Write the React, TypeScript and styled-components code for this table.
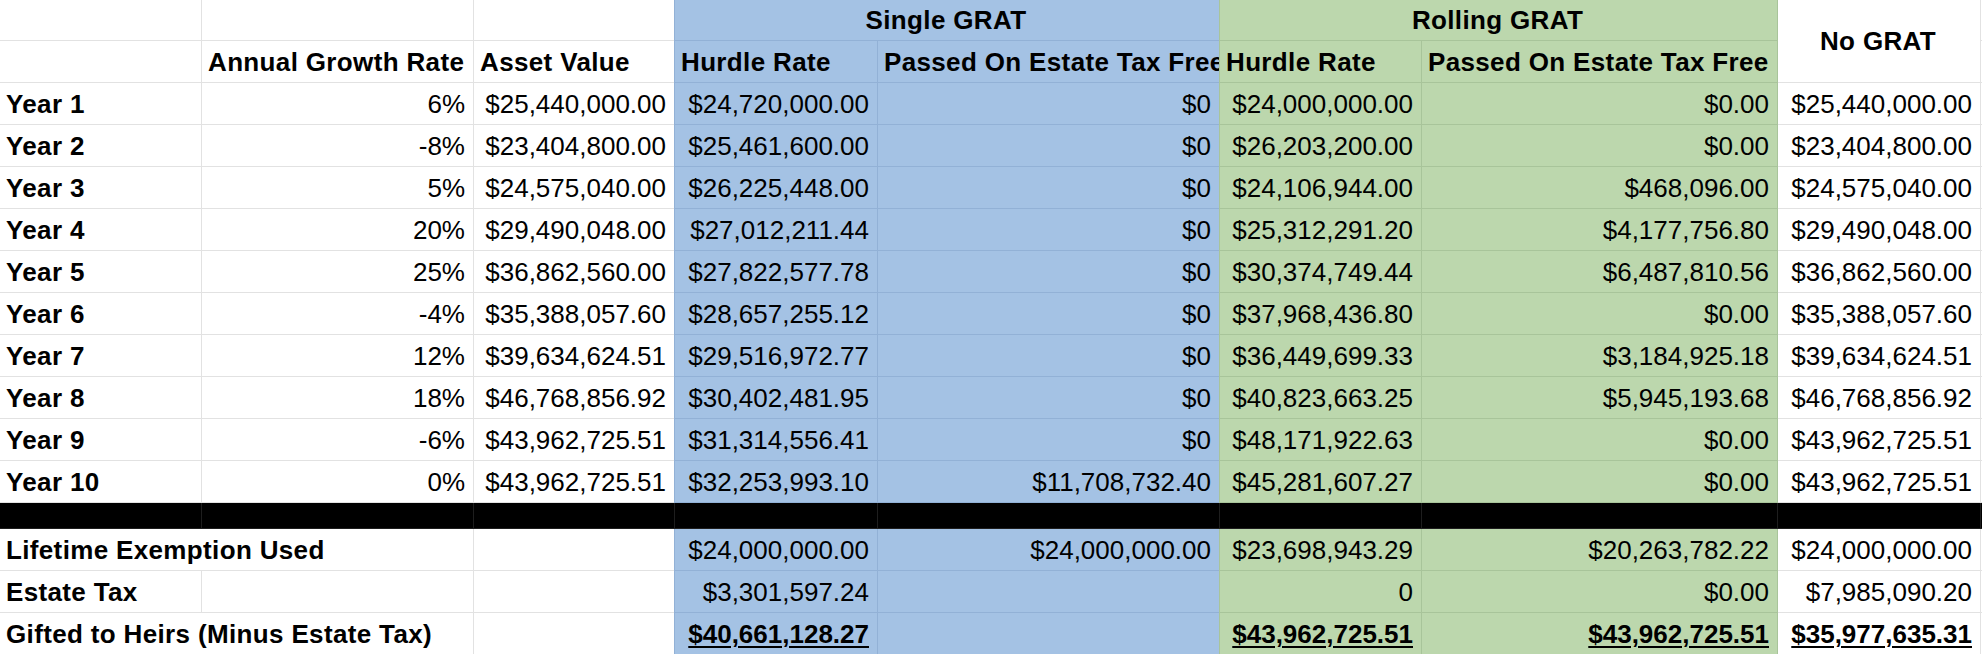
import React from 'react';
import styled, { createGlobalStyle, css } from 'styled-components';

type Tone = 'white' | 'blue' | 'green' | 'black';
type Align = 'left' | 'right' | 'center';

const tones: Record<Tone, { bg: string; line: string }> = {
  white: { bg: '#ffffff', line: '#e2e2e2' },
  blue: { bg: '#a4c2e4', line: '#92b1d6' },
  green: { bg: '#bcd7ad', line: '#a8c49a' },
  black: { bg: '#000000', line: '#1e1e1e' },
};

const years: string[][] = [
  ['6%', '$25,440,000.00', '$24,720,000.00', '$0', '$24,000,000.00', '$0.00', '$25,440,000.00'],
  ['-8%', '$23,404,800.00', '$25,461,600.00', '$0', '$26,203,200.00', '$0.00', '$23,404,800.00'],
  ['5%', '$24,575,040.00', '$26,225,448.00', '$0', '$24,106,944.00', '$468,096.00', '$24,575,040.00'],
  ['20%', '$29,490,048.00', '$27,012,211.44', '$0', '$25,312,291.20', '$4,177,756.80', '$29,490,048.00'],
  ['25%', '$36,862,560.00', '$27,822,577.78', '$0', '$30,374,749.44', '$6,487,810.56', '$36,862,560.00'],
  ['-4%', '$35,388,057.60', '$28,657,255.12', '$0', '$37,968,436.80', '$0.00', '$35,388,057.60'],
  ['12%', '$39,634,624.51', '$29,516,972.77', '$0', '$36,449,699.33', '$3,184,925.18', '$39,634,624.51'],
  ['18%', '$46,768,856.92', '$30,402,481.95', '$0', '$40,823,663.25', '$5,945,193.68', '$46,768,856.92'],
  ['-6%', '$43,962,725.51', '$31,314,556.41', '$0', '$48,171,922.63', '$0.00', '$43,962,725.51'],
  ['0%', '$43,962,725.51', '$32,253,993.10', '$11,708,732.40', '$45,281,607.27', '$0.00', '$43,962,725.51'],
];

// tone of each value column after the "Year" label
const valueTones: Tone[] = ['white', 'white', 'blue', 'blue', 'green', 'green', 'white'];

export default function App() {
  return (
    <>
      <GlobalStyle />
      <Sheet>
        {/* header row 1 */}
        <Cell $tone="white" />
        <Cell $tone="white" />
        <Cell $tone="white" />
        <Cell $tone="blue" $span={2} $align="center" $bold>
          Single GRAT
        </Cell>
        <Cell $tone="green" $span={2} $align="center" $bold>
          Rolling GRAT
        </Cell>
        <Cell $tone="white" $rows={2} $align="center" $middle $bold>
          No GRAT
        </Cell>
        <Cell $tone="white" />

        {/* header row 2 */}
        <Cell $tone="white" />
        <Cell $tone="white" $bold>Annual Growth Rate</Cell>
        <Cell $tone="white" $bold>Asset Value</Cell>
        <Cell $tone="blue" $bold>Hurdle Rate</Cell>
        <Cell $tone="blue" $bold>Passed On Estate Tax Free</Cell>
        <Cell $tone="green" $bold>Hurdle Rate</Cell>
        <Cell $tone="green" $bold>Passed On Estate Tax Free</Cell>
        <Cell $tone="white" />

        {years.map((row, i) => (
          <React.Fragment key={i}>
            <Cell $tone="white" $bold>{`Year ${i + 1}`}</Cell>
            {row.map((value, j) => (
              <Cell key={j} $tone={valueTones[j]} $align="right">
                {value}
              </Cell>
            ))}
            <Cell $tone="white" />
          </React.Fragment>
        ))}

        {/* divider */}
        {Array.from({ length: 9 }).map((_, i) => (
          <Cell key={`d${i}`} $tone="black" />
        ))}

        {/* summary */}
        <Cell $tone="white" $span={2} $bold>Lifetime Exemption Used</Cell>
        <Cell $tone="white" />
        <Cell $tone="blue" $align="right">$24,000,000.00</Cell>
        <Cell $tone="blue" $align="right">$24,000,000.00</Cell>
        <Cell $tone="green" $align="right">$23,698,943.29</Cell>
        <Cell $tone="green" $align="right">$20,263,782.22</Cell>
        <Cell $tone="white" $align="right">$24,000,000.00</Cell>
        <Cell $tone="white" />

        <Cell $tone="white" $bold>Estate Tax</Cell>
        <Cell $tone="white" />
        <Cell $tone="white" />
        <Cell $tone="blue" $align="right">$3,301,597.24</Cell>
        <Cell $tone="blue" />
        <Cell $tone="green" $align="right">0</Cell>
        <Cell $tone="green" $align="right">$0.00</Cell>
        <Cell $tone="white" $align="right">$7,985,090.20</Cell>
        <Cell $tone="white" />

        <Cell $tone="white" $span={2} $bold>Gifted to Heirs (Minus Estate Tax)</Cell>
        <Cell $tone="white" />
        <Cell $tone="blue" $align="right" $total>$40,661,128.27</Cell>
        <Cell $tone="blue" />
        <Cell $tone="green" $align="right" $total>$43,962,725.51</Cell>
        <Cell $tone="green" $align="right" $total>$43,962,725.51</Cell>
        <Cell $tone="white" $align="right" $total>$35,977,635.31</Cell>
        <Cell $tone="white" />
      </Sheet>
    </>
  );
}

const GlobalStyle = createGlobalStyle`
  html, body {
    margin: 0;
    padding: 0;
    background: #ffffff;
    overflow: hidden;
  }
`;

const Sheet = styled.div`
  display: grid;
  grid-template-columns: 202px 272px 201px 203px 342px 202px 356px 203px 1fr;
  grid-template-rows: 41px 42px repeat(10, 42px) 26px 42px 42px 42px;

  font-family: 'Liberation Sans', Arial, sans-serif;
  color: #000000;
`;

const justify: Record<Align, string> = {
  left: 'flex-start',
  right: 'flex-end',
  center: 'center',
};

const Cell = styled.div<{
  $tone: Tone;
  $align?: Align;
  $bold?: boolean;
  $total?: boolean;
  $middle?: boolean;
  $span?: number;
  $rows?: number;
}>`
  box-sizing: border-box;
  display: flex;
  align-items: ${(p) => (p.$middle ? 'center' : 'flex-end')};
  justify-content: ${(p) => justify[p.$align ?? 'left']};

  padding: 0 8px ${(p) => (p.$middle ? '0' : '7px')} 6px;

  overflow: hidden;
  white-space: nowrap;

  background: ${(p) => tones[p.$tone].bg};
  border-right: 1px solid ${(p) => tones[p.$tone].line};
  border-bottom: 1px solid ${(p) => tones[p.$tone].line};

  font-size: 26px;
  line-height: 1;
  font-weight: ${(p) => (p.$bold || p.$total ? 700 : 400)};
  letter-spacing: ${(p) => (p.$bold ? '0.35px' : '0')};

  ${(p) =>
    (p.$tone === 'blue' || p.$tone === 'green') &&
    css`
      margin-left: -1px;
      border-left: 1px solid ${tones[p.$tone].line};
    `}

  ${(p) => p.$span && css`grid-column: span ${p.$span};`}
  ${(p) => p.$rows && css`grid-row: span ${p.$rows};`}

  ${(p) =>
    p.$total &&
    css`
      text-decoration: underline;
      text-decoration-thickness: 2px;
      text-underline-offset: 3px;
    `}
`;
